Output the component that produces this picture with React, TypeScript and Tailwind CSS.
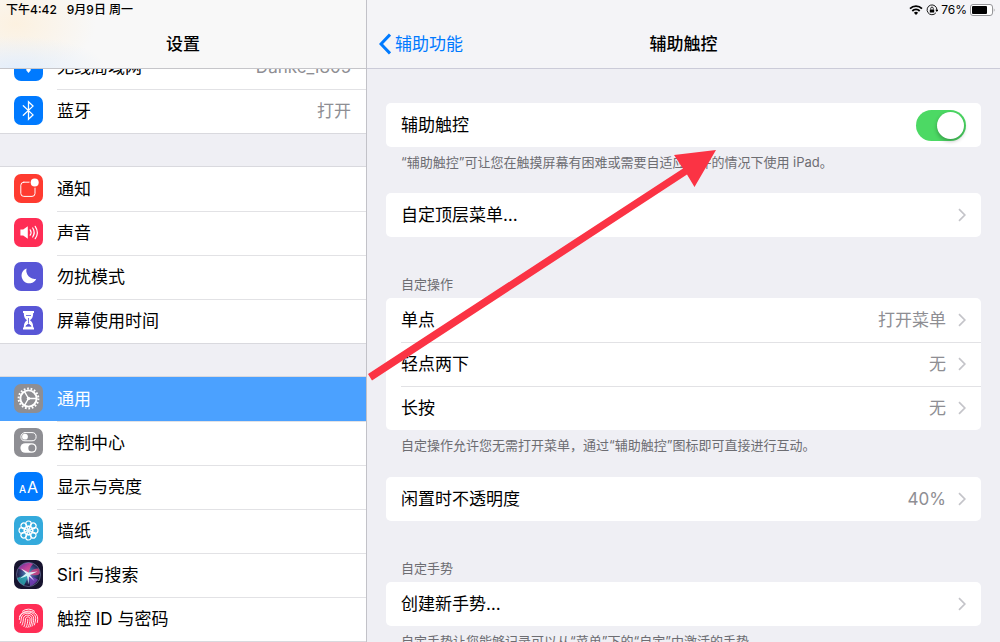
import { useState, type ReactNode } from "react";

type Item = {
  label: string,
  icon: ReactNode,
  value?: string,
  active?: boolean,
};

type Option = {
  label: string,
  value?: string,
};

const line = { fill: "none", stroke: "white", strokeLinecap: "round", strokeLinejoin: "round" } as const;

function Tile({ color, children }: { color: string, children: ReactNode }) {
  return (
    <span className={`flex size-[29px] shrink-0 items-center justify-center overflow-hidden rounded-[7px] ${color}`}>
      {children}
    </span>
  );
}

function Glyph({ children }: { children: ReactNode }) {
  return <svg viewBox="0 0 29 29" className="size-full" aria-hidden="true">{children}</svg>;
}

const wifi = (
  <Tile color="bg-[#007aff]">
    <Glyph>
      <path d="M6 11.5a12 12 0 0 1 17 0M9 14.5a8 8 0 0 1 11 0" {...line} strokeWidth="2" />
      <path d="M14.5 21l-2.6-3.2a4 4 0 0 1 5.2 0z" fill="white" />
    </Glyph>
  </Tile>
);

const bluetooth = (
  <Tile color="bg-[#007aff]">
    <Glyph>
      <path d="M9.3 9.8l9.7 9.1-4.5 4.3V5.8l4.5 4.3-9.7 9.1" {...line} strokeWidth="1.3" strokeLinejoin="miter" />
    </Glyph>
  </Tile>
);

const bell = (
  <Tile color="bg-[#ff3b30]">
    <Glyph>
      <rect x="6.8" y="8.2" width="14.2" height="14.2" rx="3" {...line} strokeWidth="1" />
      <circle cx="20.7" cy="8.5" r="5.2" fill="#ff3b30" />
      <circle cx="20.7" cy="8.5" r="4" fill="white" />
    </Glyph>
  </Tile>
);

const sound = (
  <Tile color="bg-[#ff2d55]">
    <Glyph>
      <path d="M6.4 11.5h2.8l4.6-3.3v12.6l-4.6-3.3H6.4z" fill="white" />
      <path d="M16.2 11.8q1.8 2.7 0 5.4M18.7 10q3 4.5 0 9M21.2 8.3q4.2 6.2 0 12.4" {...line} strokeWidth="1.2" />
    </Glyph>
  </Tile>
);

const moon = (
  <Tile color="bg-[#5856d6]">
    <Glyph>
      <path d="M12.6 6.4A7.7 7.7 0 1 0 22.3 16.7 8.3 8.3 0 0 1 12.6 6.4z" fill="white" />
    </Glyph>
  </Tile>
);

const hourglass = (
  <Tile color="bg-[#5856d6]">
    <Glyph>
      <path d="M9 5h11v2h-.8c0 4-1 5.5-3.2 7.2 2.2 1.7 3.2 3.2 3.2 7.2h.8v2H9v-2h.8c0-4 1-5.5 3.2-7.2-2.2-1.7-3.2-3.2-3.2-7.2H9z" fill="white" />
      <path d="M12 9.5h5M14.5 12v5M11.8 20.2l2.7-2.4 2.7 2.4z" fill="#5856d6" stroke="#5856d6" strokeWidth=".8" />
    </Glyph>
  </Tile>
);

const gear = (
  <Tile color="bg-[#8e8e93]">
    <Glyph>
      <circle cx="14.5" cy="14.5" r="9.9" {...line} strokeLinecap="butt" strokeWidth="2" strokeDasharray="1.73 1.73" />
      <circle cx="14.5" cy="14.5" r="8.1" {...line} strokeWidth="1.9" />
      <path d="M14.5 14.5h8M14.5 14.5l-4-6.9M14.5 14.5l-4 6.9" {...line} strokeWidth="1.4" />
      <circle cx="14.5" cy="14.5" r="1.7" fill="white" />
    </Glyph>
  </Tile>
);

const controls = (
  <Tile color="bg-[#8e8e93]">
    <Glyph>
      <rect x="6.9" y="4.6" width="15.2" height="8.2" rx="4.1" {...line} strokeWidth="1" />
      <circle cx="11" cy="8.7" r="2.9" fill="white" />
      <rect x="6.4" y="15.2" width="16.2" height="9.6" rx="4.8" fill="white" />
      <circle cx="17.8" cy="20" r="3.5" fill="#8e8e93" />
    </Glyph>
  </Tile>
);

const display = (
  <Tile color="bg-[#007aff]">
    <span className="flex items-baseline gap-px leading-none text-white" aria-hidden="true">
      <span className="text-[10px] font-medium">A</span>
      <span className="text-[16px]">A</span>
    </span>
  </Tile>
);

const wallpaper = (
  <Tile color="bg-[#34aadc]">
    <Glyph>
      {[0, 45, 90, 135, 180, 225, 270, 315].map((deg) => (
        <g key={deg} transform={`rotate(${deg} 14.5 14.5)`}>
          <circle cx="14.5" cy="7.8" r="2.8" {...line} strokeWidth="1.2" />
          <ellipse cx="14.5" cy="11.8" rx="1.3" ry="2.2" {...line} strokeWidth=".8" />
        </g>
      ))}
    </Glyph>
  </Tile>
);

const siri = (
  <Tile color="bg-[#17142f]">
    <Glyph>
      <defs>
        <radialGradient id="siri-bg" cx=".5" cy=".45" r=".5">
          <stop offset="0" stopColor="#5ba6c8" />
          <stop offset=".55" stopColor="#344a86" />
          <stop offset="1" stopColor="#1b1636" />
        </radialGradient>
        <linearGradient id="siri-top" x1="0" y1="0" x2="1" y2="1">
          <stop offset="0" stopColor="#6a35b8" />
          <stop offset=".5" stopColor="#d83f9c" />
          <stop offset="1" stopColor="#f05a7c" />
        </linearGradient>
      </defs>
      <circle cx="14.5" cy="14.5" r="12.5" fill="url(#siri-bg)" />
      <path d="M14.5 14.5C10 11 6 9 4.5 8.5 8 3 15 1.5 19 4c-3 3-3.5 6-4.5 10.5z" fill="url(#siri-top)" opacity=".85" />
      <path d="M14.5 14.5C17 10 20 8 24.5 8.5c2 4 1.5 6-1 6.5-3 .5-6 .5-9-.5z" fill="#e5488a" opacity=".75" />
      <path d="M14.5 14.5c3 2 6 3 9.5 5-3 5-6 6-8 6.5 0-4-1-8-1.5-11.5z" fill="#7b3fc0" opacity=".8" />
      <path d="M14.5 14.5C10 15 7 16.5 3 18c1 4 4 6 7 7.5 2-4 3.5-7 4.5-11z" fill="#2bb6ba" opacity=".75" />
      <path d="M14.5 12.5l9-1-7.5 3.5 4.5 6-5.5-4.5-.5 8-1.5-8.5L6 18.5l6-5-5-5z" fill="#e3fbff" opacity=".9" />
      <circle cx="14.5" cy="14.5" r="12" fill="none" stroke="#98a7d5" strokeOpacity=".65" strokeWidth=".7" />
    </Glyph>
  </Tile>
);

const fingerprint = (
  <Tile color="bg-[#ff2d55]">
    <Glyph>
      <g {...line} strokeWidth=".9">
        <path d="M8.5 7.2a9.3 9.3 0 0 1 12 0" />
        <path d="M5.5 12.5c2.3-7.3 15.7-7.3 18 0 .4 2 .3 4-.2 6" />
        <path d="M5.3 15.5c0-11 18.4-9.5 16.2.5-.2 1.8-.6 3.3-1.2 5" />
        <path d="M6.3 19c1-2 .8-3.2 1-5 1-6.8 12.4-6.2 12.4.8 0 2.6-.7 5-1.7 7.4" />
        <path d="M8 21c1.3-2.7 1.2-4.5 1.4-6.5.6-4.6 8.4-4.6 8.5.5 0 2.8-.8 5.4-2 8" />
        <path d="M10 22.5c1.3-3 1.3-5.4 1.5-7.5.4-2.8 4.6-2.8 4.6.2 0 3-.8 5.5-2.2 8.3" />
        <path d="M13.8 15.2c0 3-.5 5.3-1.8 8.2" />
      </g>
    </Glyph>
  </Tile>
);

const groups: Item[][] = [
  [
    { label: "无线局域网", icon: wifi, value: "Danke_1805" },
    { label: "蓝牙", icon: bluetooth, value: "打开" },
  ],
  [
    { label: "通知", icon: bell },
    { label: "声音", icon: sound },
    { label: "勿扰模式", icon: moon },
    { label: "屏幕使用时间", icon: hourglass },
  ],
  [
    { label: "通用", icon: gear, active: true },
    { label: "控制中心", icon: controls },
    { label: "显示与亮度", icon: display },
    { label: "墙纸", icon: wallpaper },
    { label: "Siri 与搜索", icon: siri },
    { label: "触控 ID 与密码", icon: fingerprint },
  ],
];

function SideRow({ item }: { item: Item }) {
  return (
    <li className="group">
      <a href="#" className={`flex h-11 gap-[14px] pl-[14px] ${item.active ? "bg-[#4ba1ff] text-white" : "bg-white"}`}>
        <span className="pt-[7px]">{item.icon}</span>
        <span className={`flex flex-1 items-center justify-between border-t pr-[15px] pb-px ${item.active ? "border-transparent" : "border-[#e2e2e5] group-first:border-transparent"}`}>
          <span>{item.label}</span>
          {item.value && <span className="text-[#8e8e93]">{item.value}</span>}
        </span>
      </a>
    </li>
  );
}

function Card({ title, note, children }: { title?: string, note?: string, children: ReactNode }) {
  return (
    <section>
      {title && <h2 className="px-[15px] pb-[5px] text-[13px] leading-[18px] text-[#6d6d72]">{title}</h2>}
      <div className="overflow-hidden rounded-[5px] bg-white pl-[15px]">{children}</div>
      {note && <p className="px-[15px] pt-[6px] text-[13px] leading-[18px] text-[#6d6d72]">{note}</p>}
    </section>
  );
}

function OptionRow({ label, value }: Option) {
  return (
    <button className="flex h-11 w-full items-center border-t border-[#e2e2e5] pr-[15px] pb-[2px] text-left first:border-transparent">
      <span className="flex-1">{label}</span>
      {value && <span className="text-[#8e8e93]">{value}</span>}
      <svg viewBox="0 0 8 14" className="ml-3 h-[14px] w-2" aria-hidden="true">
        <path d="M1 1.2l5.8 5.8L1 12.8" fill="none" stroke="#c4c4c9" strokeWidth="1.7" />
      </svg>
    </button>
  );
}

function StatusIcons() {
  return (
    <div className="flex h-5 items-center justify-end gap-[3px] pr-[5px] text-[12px]">
      <svg viewBox="0 0 14 10" className="h-[10px] w-[14px]" aria-label="Wi-Fi">
        <path d="M1 3.6a8.6 8.6 0 0 1 12 0M3.3 6a5.3 5.3 0 0 1 7.4 0" fill="none" stroke="black" strokeWidth="1.8" />
        <path d="M7 10L4.9 7.7a3 3 0 0 1 4.2 0z" />
      </svg>
      <svg viewBox="0 0 12 12" className="size-3" aria-label="旋转锁定">
        <path d="M9.9 8.8A4.9 4.9 0 1 1 10.9 6" fill="none" stroke="black" strokeWidth=".9" />
        <path d="M9.3 5.7h3L10.8 7.9z" />
        <rect x="3.8" y="5.4" width="4.4" height="3.2" rx=".4" />
        <path d="M4.7 5.5V4.4a1.3 1.3 0 0 1 2.6 0v1.1" fill="none" stroke="black" strokeWidth=".8" />
      </svg>
      <span>76%</span>
      <svg viewBox="0 0 25 12" className="h-3 w-[25px]" aria-label="电池">
        <rect x=".5" y=".5" width="22" height="11" rx="2.5" fill="white" stroke="#8a8a8d" strokeWidth=".9" />
        <rect x="2" y="2" width="15" height="8" rx="1" />
        <path d="M23.8 4.2q1.4 1.8 0 3.6z" fill="#8a8a8d" />
      </svg>
    </div>
  );
}

export default function App() {
  const [enabled, setEnabled] = useState<boolean>(true);

  return (
    <main className="relative grid h-screen grid-cols-[367fr_633fr] overflow-hidden bg-[#efeff4] font-[Inter,'Noto_Sans_CJK_SC',sans-serif] text-[17px] leading-6 text-black">
      <aside className="flex min-h-0 flex-col border-r border-[#c2c2c8]">
        <header className="z-10 shrink-0 border-b border-[#c6c6ca] bg-[#f8f8f8] bg-[radial-gradient(ellipse_90px_32px_at_16px_68px,#e4eefa,transparent),radial-gradient(ellipse_80px_50px_at_16px_24px,#fcf1e0,transparent)]">
          <div className="flex h-5 items-center gap-[10px] pl-[6px] text-[12px] font-medium">
            <span>下午4:42</span>
            <span>9月9日 周一</span>
          </div>
          <h1 className="flex h-12 items-center justify-center font-medium">设置</h1>
        </header>
        <div className="min-h-0 flex-1 overflow-hidden">
          {/* list is scrolled so the first row sits half under the header */}
          <nav className="-mt-[25px] flex flex-col gap-8">
            {groups.map((items, i) => (
              <ul key={i} className="border-y border-[#d9d9de]">
                {items.map((item) => <SideRow key={item.label} item={item} />)}
              </ul>
            ))}
          </nav>
        </div>
      </aside>

      <section className="flex min-h-0 flex-col">
        <header className="z-10 shrink-0 border-b border-[#cbcbd8] bg-[#f4f4f7]">
          <StatusIcons />
          <div className="grid h-12 grid-cols-[1fr_auto_1fr] items-center">
            <a href="#" className="flex items-center gap-1 pl-3 text-[#007aff]">
              <svg viewBox="0 0 12 22" className="h-[22px] w-3" aria-hidden="true">
                <path d="M11 1.5L2 11l9 9.5" fill="none" stroke="#007aff" strokeWidth="3" />
              </svg>
              辅助功能
            </a>
            <h1 className="font-medium">辅助触控</h1>
          </div>
        </header>

        <div className="min-h-0 flex-1 overflow-hidden px-[19px] pt-[34px]">
          <Card note="“辅助触控”可让您在触摸屏幕有困难或需要自适应配件的情况下使用 iPad。">
            <label className="flex h-11 items-center justify-between pr-[15px]">
              辅助触控
              <input
                type="checkbox"
                role="switch"
                checked={enabled}
                onChange={(e) => setEnabled(e.target.checked)}
                className="h-[31px] w-[50px] appearance-none rounded-full bg-[#e5e5ea] p-[2px] before:block before:size-[27px] before:rounded-full before:bg-white before:shadow-[0_2px_4px_rgba(0,0,0,0.3)] checked:bg-[#4cd964] checked:before:ml-[19px]"
              />
            </label>
          </Card>
          <div className="mt-[22px]">
            <Card><OptionRow label="自定顶层菜单…" /></Card>
          </div>
          <div className="mt-[38px]">
            <Card title="自定操作" note="自定操作允许您无需打开菜单，通过“辅助触控”图标即可直接进行互动。">
              <OptionRow label="单点" value="打开菜单" />
              <OptionRow label="轻点两下" value="无" />
              <OptionRow label="长按" value="无" />
            </Card>
          </div>
          <div className="mt-[23px]">
            <Card><OptionRow label="闲置时不透明度" value="40%" /></Card>
          </div>
          <div className="mt-[38px]">
            <Card title="自定手势" note="自定手势让您能够记录可以从“菜单”下的“自定”中激活的手势。">
              <OptionRow label="创建新手势…" />
            </Card>
          </div>
        </div>
      </section>

      {/* arrow pointing at the switch */}
      <svg viewBox="0 0 350 232" className="pointer-events-none absolute top-[149px] left-[367px] z-20 h-[232px] w-[350px]" aria-hidden="true">
        <path d="M1 225L316 19.5L307 6L349 1L327.5 38L320 25.5L5 231.5z" fill="#fb3344" />
      </svg>
    </main>
  );
}
